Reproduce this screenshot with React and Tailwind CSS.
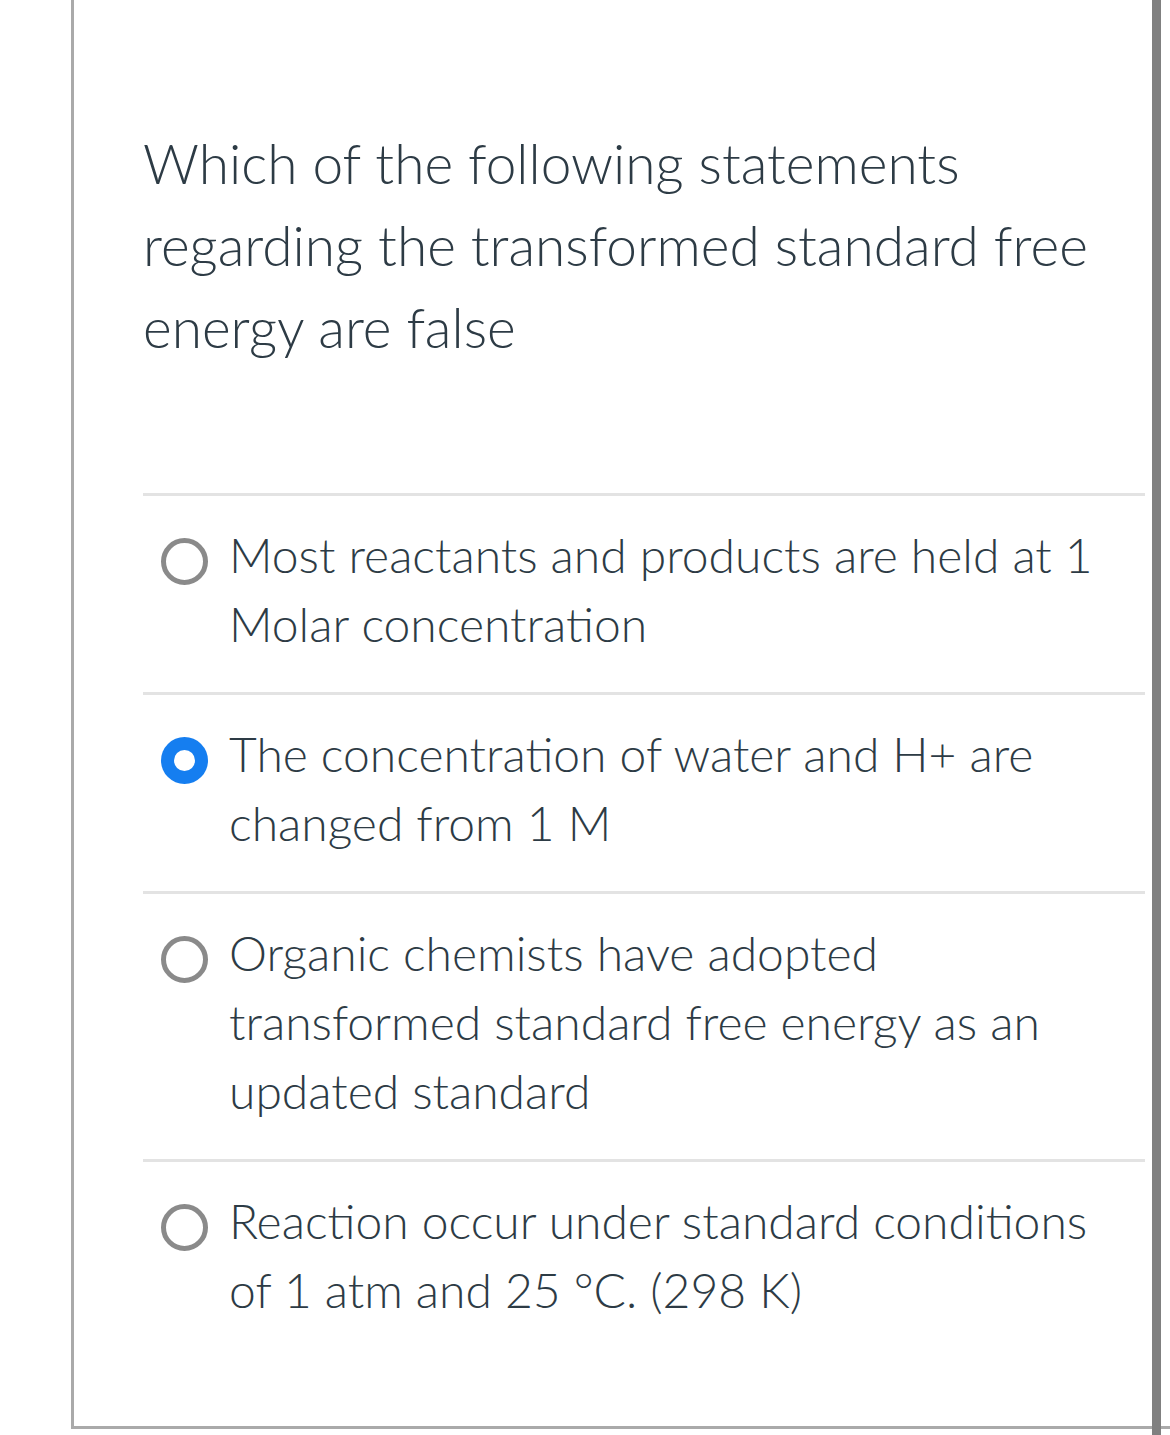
import React from "react";

const answers = [
  { text: "Most reactants and products are held at 1 Molar concentration", selected: false },
  { text: "The concentration of water and H+ are changed from 1 M", selected: true },
  { text: "Organic chemists have adopted transformed standard free energy as an updated standard", selected: false },
  { text: "Reaction occur under standard conditions of 1 atm and 25 °C. (298 K)", selected: false },
];

function Radio({ selected }) {
  if (selected) {
    return (
      <div className="w-[47px] h-[47px] shrink-0 rounded-full bg-[#157ef0] flex items-center justify-center">
        <div className="w-[21px] h-[21px] rounded-full bg-white" />
      </div>
    );
  }
  return <div className="w-[47px] h-[47px] shrink-0 rounded-full border-[5px] border-[#8a8a8a] bg-white" />;
}

export default function App() {
  return (
    <div
      className="relative w-[1170px] h-[1435px] bg-white overflow-hidden text-[#2d3b45] font-light"
      style={{ fontFamily: "Lato, 'Noto Sans', sans-serif" }}
    >
      <div className="ml-[71px] h-[1429px] border-l-[3px] border-b-[3px] border-[#aaaaaa] pl-[69px] pr-[25px] pt-[122px]">
        <div className="text-[55px] leading-[82px] pr-[40px]">
          Which of the following statements regarding the transformed standard free energy are false
        </div>
        <div className="mt-[125px]">
          {answers.map((a, i) => (
            <div key={i} className="border-t-[3px] border-[#e3e3e3] pt-[24px] pb-[34px] flex">
              <div className="ml-[18px] mt-[18px]">
                <Radio selected={a.selected} />
              </div>
              <div className="ml-[21px] text-[48px] leading-[69px] pr-[28px]">{a.text}</div>
            </div>
          ))}
        </div>
      </div>
      <div className="absolute left-[1152px] top-0 w-[9px] h-[1435px] bg-[#808080]" />
    </div>
  );
}
